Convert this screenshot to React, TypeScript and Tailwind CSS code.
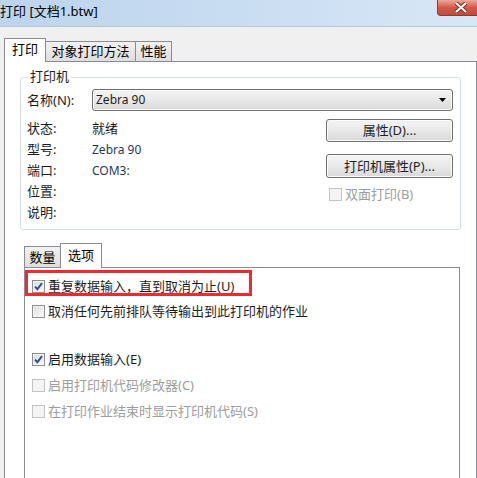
import type { ReactNode } from 'react'

const FONT = "font-['Noto_Sans','Noto_Sans_CJK_SC',sans-serif]"

function CheckBox({ checked = false, disabled = false }: { checked?: boolean; disabled?: boolean }) {
  return (
    <span
      className={`relative flex h-[13px] w-[13px] shrink-0 items-center justify-center border ${
        disabled
          ? 'border-[#c4c4c4] bg-[#f4f4f4]'
          : 'border-[#8e8f8f] bg-linear-to-br from-[#dcdcdc] to-[#fbfbfb] shadow-[inset_0_0_0_1px_#f4f4f4]'
      }`}
    >
      {checked && (
        <svg width="9" height="9" viewBox="0 0 9 9">
          <path d="M1 4.6 L3.4 7.2 L8 1.2" fill="none" stroke="#2b4d9a" strokeWidth="1.9" />
        </svg>
      )}
    </span>
  )
}

function Button({ children }: { children: ReactNode }) {
  return (
    <div className="flex w-[127px] items-center justify-center rounded-[3px] border border-[#707070] bg-linear-to-b from-[#f4f4f4] via-[#e9e9e9] to-[#d9d9d9] text-[13px] leading-none text-[#1e1e1e] shadow-[inset_0_0_0_1px_#fbfbfb]">
      {children}
    </div>
  )
}

function InfoRow({ label, value, latin }: { label: string; value?: string; latin?: boolean }) {
  return (
    <div className="flex h-[21px] items-center text-[13px] leading-none">
      <span className="w-[65px] text-[#1e1e1e]">{label}</span>
      {value && <span className={latin ? 'text-[12px] text-[#1e395b]' : 'text-[#1e1e1e]'}>{value}</span>}
    </div>
  )
}

function OptionRow({
  label,
  checked,
  disabled,
  h,
}: {
  label: string
  checked?: boolean
  disabled?: boolean
  h: string
}) {
  return (
    <div className={`flex items-center gap-[3px] pl-[7px] ${h}`}>
      <CheckBox checked={checked} disabled={disabled} />
      <span className={`text-[13px] leading-none ${disabled ? 'text-[#9d9d9d]' : 'text-[#1e1e1e]'}`}>{label}</span>
    </div>
  )
}

export default function App() {
  return (
    <div className={`flex h-[478px] w-[477px] flex-col overflow-hidden bg-[#f0f0f0] ${FONT}`}>
      {/* Title bar */}
      <div className="flex h-[27px] shrink-0 items-start justify-between border-b border-[#b4c8dc] bg-linear-to-r from-[#bcd4ec] via-[#c9ddf2] to-[#d8e7f6]">
        <span className="mt-[5px] text-[13px] leading-none text-[#000]">打印 [文档1.btw]</span>
        <div className="flex h-[16px] w-[40px] items-center justify-center rounded-bl-[4px] border border-t-0 border-r-0 border-[#8b3b31] bg-linear-to-b from-[#e9a89b] via-[#d2594a] to-[#c8483a]">
          <svg width="14" height="11" viewBox="0 0 14 11" className="ml-[6px]">
            <path d="M2 1 L12 10 M12 1 L2 10" stroke="#6b2a22" strokeWidth="4" />
            <path d="M2 1 L12 10 M12 1 L2 10" stroke="#fff" strokeWidth="2.2" />
          </svg>
        </div>
      </div>

      <div className="flex flex-1 flex-col pl-[4px] pt-[10px]">
        {/* Tabs */}
        <div className="flex h-[24px] items-end text-[13px] leading-none">
          <div className="relative z-10 -mb-px flex h-[24px] w-[42px] items-center justify-center border border-b-0 border-[#898c95] bg-white pb-[2px]">
            打印
          </div>
          <div className="flex h-[20px] w-[90px] items-center justify-center border border-l-0 border-b-0 border-[#898c95] bg-linear-to-b from-[#f2f2f2] to-[#dedede]">
            对象打印方法
          </div>
          <div className="flex h-[20px] w-[36px] items-center justify-center border border-l-0 border-b-0 border-[#898c95] bg-linear-to-b from-[#f2f2f2] to-[#dedede]">
            性能
          </div>
        </div>

        {/* Main panel */}
        <div className="flex flex-1 flex-col border border-b-0 border-[#898c95] bg-white">
          {/* Printer group */}
          <div className="relative ml-[15px] mt-[15px] h-[153px] w-[441px] rounded-[3px] border border-[#d5dfe5] pl-[6px] pr-[7px] pt-[11px]">
            <span className="absolute left-[7px] top-[-8px] bg-white px-[2px] text-[13px] leading-none text-[#1e1e1e]">
              打印机
            </span>
            <div className="flex h-[22px] items-center">
              <span className="w-[65px] text-[13px] leading-none text-[#1e1e1e]">名称(N):</span>
              <div className="flex h-[22px] w-[361px] items-center justify-between rounded-[3px] border border-[#707070] bg-linear-to-b from-[#f4f4f4] via-[#e9e9e9] to-[#d8d8d8] pl-[3px] pr-[6px] shadow-[inset_0_0_0_1px_#fbfbfb]">
                <span className="text-[12px] leading-none text-[#1e1e1e]">Zebra 90</span>
                <svg width="7" height="4" viewBox="0 0 7 4">
                  <path d="M0 0 H7 L3.5 4 Z" fill="#000" />
                </svg>
              </div>
            </div>
            <div className="mt-[7px] flex justify-between">
              <div className="flex flex-col">
                <InfoRow label="状态:" value="就绪" />
                <InfoRow label="型号:" value="Zebra 90" latin />
                <InfoRow label="端口:" value="COM3:" latin />
                <InfoRow label="位置:" />
                <InfoRow label="说明:" />
              </div>
              <div className="mt-[1px] flex w-[127px] flex-col">
                <div className="flex h-[23px]">
                  <Button>属性(D)...</Button>
                </div>
                <div className="mt-[12px] flex h-[24px]">
                  <Button>打印机属性(P)...</Button>
                </div>
                <div className="mt-[7px] flex h-[18px] items-center gap-[3px] pl-[3px]">
                  <CheckBox disabled />
                  <span className="text-[13px] leading-none text-[#9d9d9d]">双面打印(B)</span>
                </div>
              </div>
            </div>
          </div>

          {/* Inner tabs */}
          <div className="ml-[19px] mt-[12px] flex h-[25px] items-end text-[13px] leading-none">
            <div className="flex h-[21px] w-[36px] items-center justify-center border border-b-0 border-r-0 border-[#898c95] bg-linear-to-b from-[#f2f2f2] to-[#dedede]">
              数量
            </div>
            <div className="relative z-10 -mb-px flex h-[25px] w-[42px] items-center justify-center border border-b-0 border-[#898c95] bg-white pb-[2px]">
              选项
            </div>
          </div>

          {/* Options panel */}
          <div className="relative ml-[19px] flex w-[436px] flex-1 flex-col border border-b-0 border-[#898c95] bg-white pt-[6px]">
            <div className="pointer-events-none absolute left-0 top-[2px] h-[26px] w-[227px] border-[3px] border-[#ec2a2f]" />
            <OptionRow h="h-[25px]" checked label="重复数据输入，直到取消为止(U)" />
            <OptionRow h="h-[25px]" label="取消任何先前排队等待输出到此打印机的作业" />
            <div className="h-[22px]" />
            <OptionRow h="h-[26px]" checked label="启用数据输入(E)" />
            <OptionRow h="h-[26px]" disabled label="启用打印机代码修改器(C)" />
            <OptionRow h="h-[26px]" disabled label="在打印作业结束时显示打印机代码(S)" />
          </div>
        </div>
      </div>
    </div>
  )
}
